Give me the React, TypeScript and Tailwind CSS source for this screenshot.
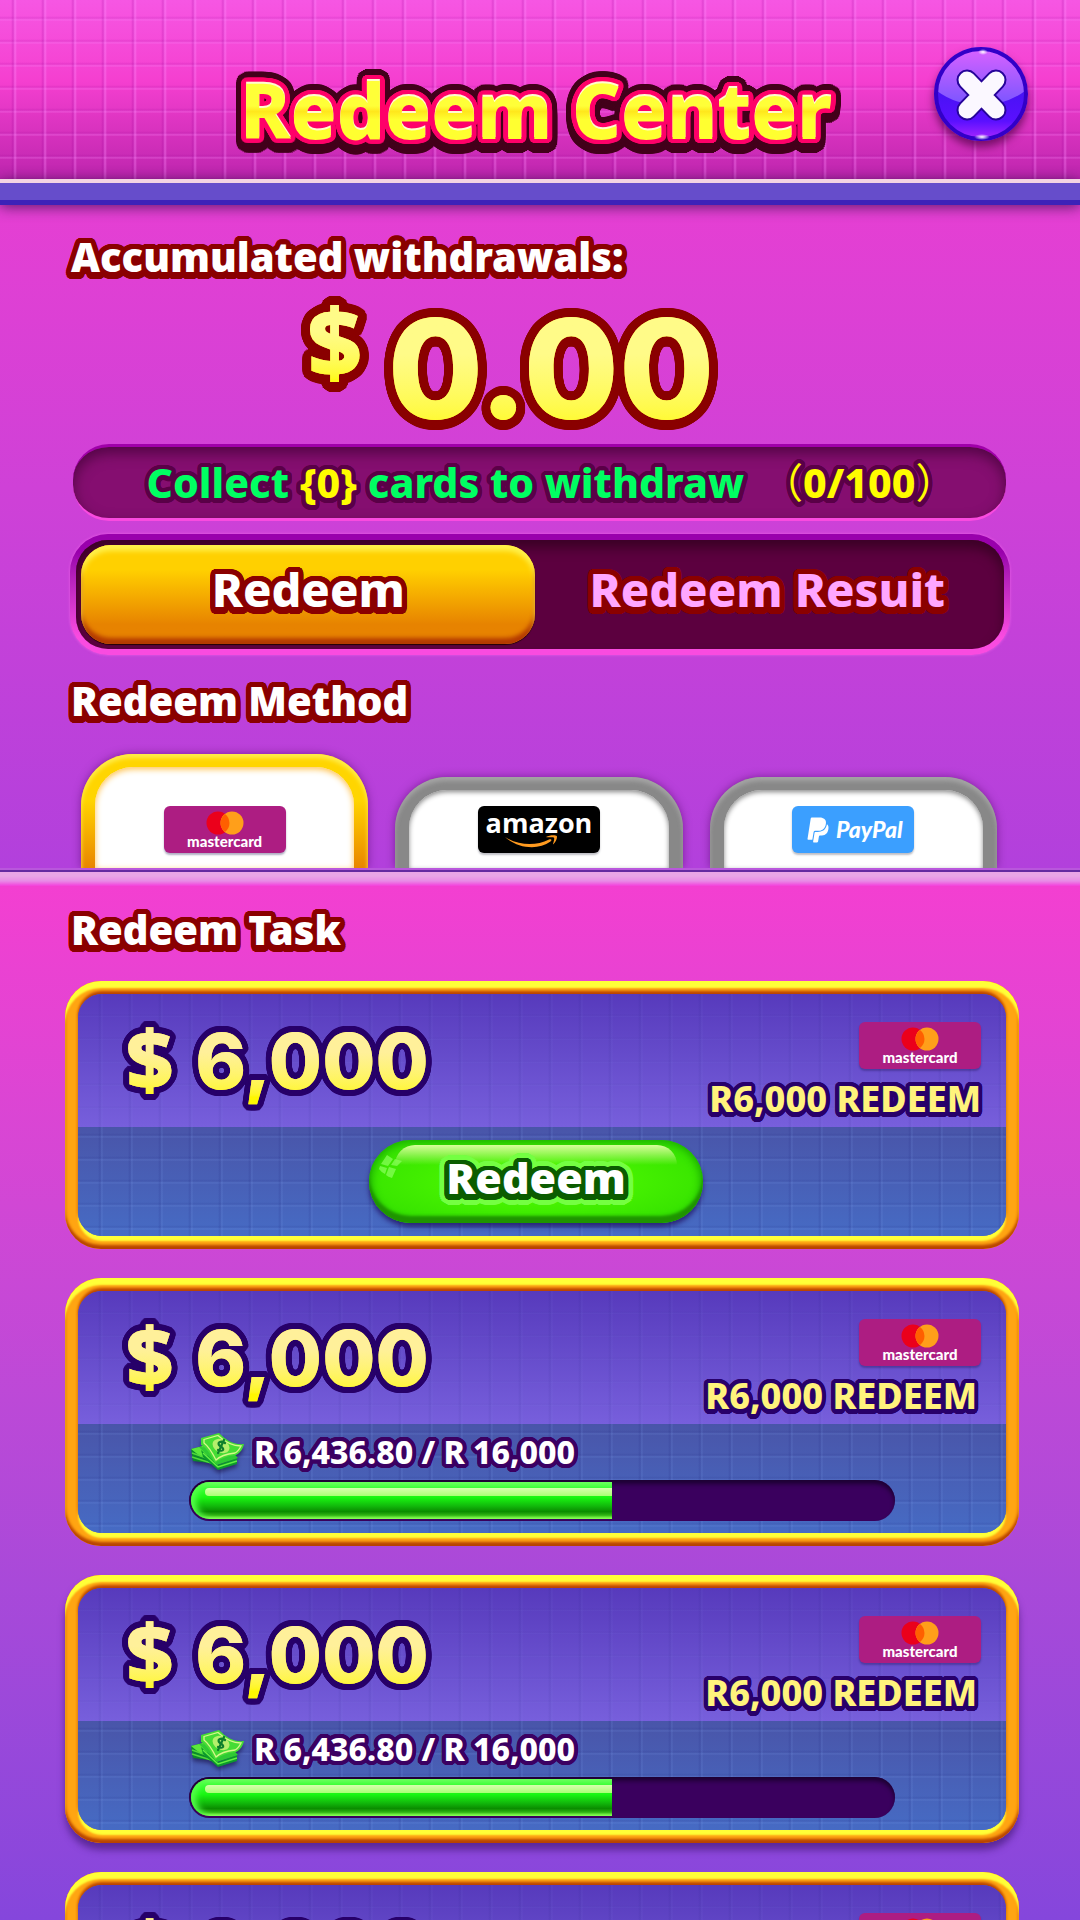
import React from "react";
import { FaPaypal } from "react-icons/fa";

/** Rounded outline: a ring of hard shadows at the given radius, optionally moved down. */
function ring(radius: number, color: string, dy = 0) {
  const steps = 32;
  return Array.from({ length: steps }, (_, i) => {
    const a = (i / steps) * Math.PI * 2;
    return `${(Math.cos(a) * radius).toFixed(2)}px ${(Math.sin(a) * radius + dy).toFixed(2)}px 0 ${color}`;
  }).join(",");
}

const shadows = {
  heading: [ring(5, "#8a0000"), ring(5, "#8a0000", 2)].join(","),
  amount: [ring(9, "#8a0000"), ring(9, "#8a0000", 1)].join(","),
  notice: [ring(4, "#5a0047"), ring(4, "#5a0047", 1)].join(","),
  cardAmount: [ring(3, "#28006a"), ring(6, "#28006a")].join(","),
  cardLabel: [ring(4, "#28006a"), ring(3, "#28006a", 2)].join(","),
  progress: ring(4, "#3b0062"),
  button: [ring(5, "#0b5c00", 1), ring(3, "#0b5c00"), ring(10, "#74ff42", 1), ring(7, "#74ff42", 1)].join(","),
  titlePink: [ring(5, "#ff0069", 1), ring(3, "#ff0069", 2)].join(","),
  titleDark: [ring(10, "#43001b", 0), ring(10, "#43001b", 3), ring(10, "#43001b", 6)].join(","),
};

/** Text with a vertical gradient fill laid over its own outlined copy. */
function GradientText({ text, className, shadow }: { text: string; className: string; shadow: string }) {
  return (
    <span
      data-text={text}
      className={`relative inline-block whitespace-pre before:absolute before:inset-0 before:bg-clip-text before:text-transparent before:[text-shadow:none] before:content-[attr(data-text)] ${className}`}
      style={{ textShadow: shadow }}
    >
      {text}
    </span>
  );
}

function SectionTitle({ children }: { children: React.ReactNode }) {
  return (
    <h2
      className="pl-[71px] text-[40px] leading-10 font-black text-white"
      style={{ textShadow: shadows.heading }}
    >
      {children}
    </h2>
  );
}

function CloseIcon() {
  return (
    <svg viewBox="0 0 94 94" className="size-full" aria-hidden="true">
      <defs>
        <linearGradient id="close-low" x1="0" y1="0" x2="0" y2="1">
          <stop offset="0.5" stopColor="#4a12f5" />
          <stop offset="0.8" stopColor="#5a10ff" />
          <stop offset="1" stopColor="#a626ff" />
        </linearGradient>
        <linearGradient id="close-top" x1="0" y1="0" x2="0" y2="1">
          <stop offset="0" stopColor="#dd62ff" />
          <stop offset="0.5" stopColor="#a95cff" />
          <stop offset="1" stopColor="#7a55ff" />
        </linearGradient>
        <radialGradient id="close-glint">
          <stop offset="0" stopColor="#fff" />
          <stop offset="1" stopColor="#fff" stopOpacity="0" />
        </radialGradient>
      </defs>
      <circle cx="47" cy="47" r="45" fill="url(#close-low)" />
      <path d="M3 44A44 44 0 0 1 91 44Q72 58 47 58T3 44Z" fill="url(#close-top)" />
      <circle cx="47" cy="47" r="45" fill="none" stroke="#3200c8" strokeWidth="4" />
      <path d="M33 33L62 63M62 33L33 63" stroke="#26049a" strokeWidth="21" strokeLinecap="round" />
      <path d="M33 33L62 63M62 33L33 63" stroke="#fbf8ff" strokeWidth="17" strokeLinecap="round" />
      <ellipse cx="49" cy="5" rx="5" ry="3" fill="url(#close-glint)" />
      <ellipse cx="48" cy="90" rx="8" ry="3" fill="url(#close-glint)" />
    </svg>
  );
}

function MastercardLogo() {
  return (
    <span className="flex h-[47px] w-[122px] flex-col items-center rounded-md bg-[#ad1d82] pt-[5px] shadow-[0_2px_2px_rgba(30,20,80,0.35)]">
      <svg viewBox="0 0 38 24" className="h-6 w-[38px]" aria-hidden="true">
        <circle cx="12" cy="12" r="11.5" fill="#eb001b" />
        <circle cx="26" cy="12" r="11.5" fill="#ff9f1a" />
        <path d="M19 2.9A11.5 11.5 0 0 1 19 21.1A11.5 11.5 0 0 1 19 2.9Z" fill="#ff5f00" />
      </svg>
      <span className="font-['Lato',sans-serif] text-[15px] leading-[13px] font-black text-white">mastercard</span>
    </span>
  );
}

function AmazonLogo() {
  return (
    <span className="relative flex h-[47px] w-[122px] justify-center rounded-md bg-black shadow-[0_2px_2px_rgba(40,40,60,0.3)]">
      <span className="font-['Open_Sans',sans-serif] text-[27px] leading-[34px] font-bold text-white">amazon</span>
      <svg viewBox="0 0 54 14" className="absolute top-[29px] left-[26px] h-[14px] w-[54px]" aria-hidden="true">
        <path d="M1 2C16 11 32 11 45 4.500C47 3.500 48.500 5 46.500 6.500C34 15.500 14 13.500 1 2Z" fill="#ff9a1f" />
        <path d="M42 2C46 -0.500 52 0 52.800 1C53.500 2.500 52 7 49 9.500C48.500 9.500 51 4 50 2.700C49 1.500 43.500 2.700 42 2Z" fill="#ff9a1f" />
      </svg>
    </span>
  );
}

function PaypalLogo() {
  return (
    <span className="flex h-[47px] w-[122px] items-center justify-center gap-1 rounded-md bg-[#3b9fff] text-white shadow-[0_2px_2px_rgba(40,40,60,0.3)]">
      <FaPaypal className="size-7" aria-hidden="true" />
      <span className="font-['Lato',sans-serif] text-[23px] leading-none font-black italic">PayPal</span>
    </span>
  );
}

function MoneyIcon() {
  return (
    <svg viewBox="0 0 56 40" className="h-10 w-14 drop-shadow-[0_3px_2px_rgba(20,10,60,0.6)]" aria-hidden="true">
      <path d="M2 17L18 13L30 25L28 32L4 29Z" fill="#0b8a2b" />
      <path d="M2 17L14 14L24 22L12 25Z" fill="#5be83a" />
      <path d="M3 21L20 27M3 25L22 31" stroke="#4fd83a" strokeWidth="1.500" />
      <path d="M12 18L29 33L48 26V32L29 38L14 25Z" fill="#0c9a2c" />
      <path d="M14 21L29 35L48 29" fill="none" stroke="#64ee42" strokeWidth="1.500" />
      <path d="M10 15L28 33L49 26L40 16Z" fill="#2fc934" />
      <path d="M12 6L30 1C37 8 44 13 55 12C54 17 51 21 47 23C37 24 31 27 26 31C22 23 17 15 12 13Z" fill="#45dc35" />
      <path d="M15 7.500L29 3.500C36 10 43 14 52 14C50 18 48 20 46 21C37 22 31 24 27 28C23 20 19 14 15 11Z" fill="none" stroke="#d6f78a" strokeWidth="1.300" />
      <ellipse cx="32" cy="14" rx="9" ry="6.500" transform="rotate(28 32 14)" fill="#b5ef6c" />
      <path d="M36 11C32 8 27 11 31 14C36 17 35 20 29 18M35 8L29 21" fill="none" stroke="#0d7f2c" strokeWidth="2.200" strokeLinecap="round" />
    </svg>
  );
}

function MethodTab({ label, active, children }: { label: string; active?: boolean; children: React.ReactNode }) {
  return (
    <button
      type="button"
      aria-label={label}
      aria-pressed={!!active}
      className={
        active
          ? "flex h-[114px] flex-1 rounded-t-[52px] bg-linear-to-b from-[#ffd500] from-40% to-[#e88500] px-[14px] pt-[13px] shadow-[0_0_8px_rgba(70,0,90,0.5),inset_0_4px_4px_#ffec4a]"
          : "flex h-[91px] flex-1 rounded-t-[52px] bg-[#888] px-[14px] pt-[13px] shadow-[0_0_8px_rgba(70,0,90,0.5),inset_0_4px_4px_#a4a4a4]"
      }
    >
      <span
        className={
          active
            ? "flex h-full w-full items-end justify-center rounded-t-[38px] bg-white pb-[15px] shadow-[inset_0_2px_6px_#ffc04a]"
            : "flex h-full w-full items-end justify-center rounded-t-[38px] bg-white pb-[15px] shadow-[inset_0_2px_5px_#888]"
        }
      >
        {children}
      </span>
    </button>
  );
}

type Task = { amount: string; label: string; current?: string; target?: string; percent?: number; raised?: boolean };

const tasks: Task[] = [
  { amount: "6,000", label: "R6,000 REDEEM" },
  { amount: "6,000", label: "R6,000 REDEEM", current: "R 6,436.80", target: "R 16,000", percent: 60 },
  { amount: "6,000", label: "R6,000 REDEEM", current: "R 6,436.80", target: "R 16,000", percent: 60, raised: true },
  { amount: "6,000", label: "R6,000 REDEEM", current: "R 6,436.80", target: "R 16,000", percent: 60 },
];

const faintTiles =
  "bg-[repeating-linear-gradient(90deg,transparent_0_20px,rgba(20,20,110,0.08)_22px,rgba(150,170,255,0.07)_24px,transparent_25px_30px),repeating-linear-gradient(180deg,transparent_0_20px,rgba(20,20,110,0.04)_21px,rgba(150,170,255,0.06)_23px)]";
const tiles =
  "bg-[repeating-linear-gradient(90deg,transparent_0_20px,rgba(20,20,110,0.13)_22px,rgba(140,180,255,0.16)_24px,transparent_25px_30px),repeating-linear-gradient(180deg,transparent_0_6px,rgba(20,20,110,0.1)_8px,rgba(140,180,255,0.16)_10px,transparent_11px_23px)]";

function TaskCard({ task }: { task: Task }) {
  return (
    <li
      className={`shrink-0 rounded-[36px] bg-[#ffa512] p-[13px] ${
        task.raised
          ? "shadow-[0_7px_7px_rgba(60,20,110,0.6),inset_0_7px_2px_#ffff38,inset_0_-4px_3px_#b84300,inset_0_0_4px_#ff8000]"
          : "shadow-[inset_0_7px_2px_#ffff38,inset_0_-4px_3px_#b84300,inset_0_0_4px_#ff8000]"
      }`}
    >
      <div className="overflow-hidden rounded-[24px] bg-[#4668be] shadow-[0_-3px_3px_#bb4300,0_5px_2px_#ffff38,0_0_3px_#ff8500]">
        <div className="bg-linear-to-b from-[#573abc] to-[#775fdc]">
          <div className={`flex h-[133px] items-start justify-between pr-[25px] pl-[48px] ${faintTiles}`}>
            <p className="flex gap-[22px] pt-[22px] font-black">
              <GradientText
                text="$"
                shadow={shadows.cardAmount}
                className="text-[82px] leading-[82px] text-[#fff22c] before:bg-linear-to-b before:from-[#fff09a] before:from-40% before:to-[#fff700] before:to-90%"
              />
              <GradientText
                text={task.amount}
                shadow={shadows.cardAmount}
                className="font-['Inter',sans-serif] text-[77px] leading-[90px] font-extrabold text-[#fff22c] before:bg-linear-to-b before:from-[#fff09a] before:from-40% before:to-[#fff700] before:to-90%"
              />
            </p>
            <div className="flex flex-col items-end gap-3 pt-[28px]">
              <MastercardLogo />
              <p
                className={`text-[36px] leading-9 font-extrabold text-[#fff37c] ${task.percent ? "pr-1" : ""}`}
                style={{ textShadow: shadows.cardLabel }}
              >
                {task.label}
              </p>
            </div>
          </div>
        </div>
        <div className="bg-linear-to-b from-[#4955a9] to-[#466bc4]">
          <div className={`flex h-[109px] flex-col ${tiles}`}>
            {task.percent === undefined ? (
              <div className="flex justify-center pt-[13px] pr-3">
                <button
                  type="button"
                  className="relative h-[83px] w-[334px] rounded-full bg-radial from-[#52ff00] to-[#2fdc00] pb-2 text-[43px] leading-none font-black text-white shadow-[0_4px_5px_rgba(30,10,90,0.7),inset_0_-7px_3px_#1f9400,inset_0_0_8px_2px_#19a800] before:absolute before:inset-x-[26px] before:top-[5px] before:h-5 before:rounded-t-[20px] before:bg-linear-to-b before:from-[#d9ff9a] before:to-transparent"
                >
                  <svg viewBox="0 0 24 24" className="absolute top-[14px] left-[9px] size-6" aria-hidden="true">
                    <path d="M9 1L15 5L10 12L3 10ZM17 5L24 7L19 12L13 11ZM2 12L9 14L7 20Q3 18 1 15ZM11 13L18 15L14 24Q10 23 8 21Z" fill="#8cff5e" opacity="0.7" />
                  </svg>
                  <span className="relative" style={{ textShadow: shadows.button }}>
                    Redeem
                  </span>
                </button>
              </div>
            ) : (
              <div className="px-[111px] pt-[8px]">
                <div className="flex h-[40px] items-center gap-[9px]">
                  <MoneyIcon />
                  <p
                    className="text-[32px] leading-10 font-extrabold whitespace-nowrap text-white"
                    style={{ textShadow: shadows.progress }}
                  >
                    {task.current} / {task.target}
                  </p>
                </div>
                <div
                  role="progressbar"
                  aria-label="Redeem progress"
                  aria-valuenow={task.percent}
                  aria-valuemin={0}
                  aria-valuemax={100}
                  className="mt-2 h-[41px] overflow-hidden rounded-full bg-[#3a005e] p-[2px] shadow-[inset_0_4px_4px_#1d0033]"
                >
                  <div
                    className="relative h-full rounded-l-full bg-[linear-gradient(#73ff63_0%,#39ff35_17%,#19f511_42%,#11b80b_65%,#0a8c00_80%,#31b414_90%,#8cff52_98%)] shadow-[inset_7px_0_6px_-2px_#55ff4a] before:absolute before:top-[6px] before:right-0 before:left-[14px] before:h-2 before:rounded-l-full before:bg-linear-to-b before:from-[#d7ffad] before:to-[#aaff73]"
                    style={{ width: `${task.percent}%` }}
                  />
                </div>
              </div>
            )}
          </div>
        </div>
      </div>
    </li>
  );
}

export default function App() {
  return (
    <div className="flex h-screen flex-col overflow-hidden font-['Noto_Sans',sans-serif]">
      <header className="bg-linear-to-b from-[#f656e3] via-[#f53fd0] via-45% to-[#bd25ae]">
        <div className="grid h-[179px] grid-cols-[1fr_auto_1fr] items-start bg-[repeating-linear-gradient(90deg,transparent_0_11px,rgba(150,0,150,0.22)_13px,rgba(255,140,255,0.4)_15px,transparent_17px_30px),repeating-linear-gradient(180deg,transparent_0_16px,rgba(150,0,150,0.15)_18px,rgba(255,140,255,0.32)_20px,transparent_21px_23px)]">
          <span />
          <h1
            data-text="Redeem Center"
            className="relative isolate mr-2 pt-[68px] text-[76px] leading-[80px] font-extrabold whitespace-nowrap text-[#fffbd0] before:absolute before:inset-x-0 before:top-[68px] before:z-[-1] before:[text-shadow:var(--dark)] before:content-[attr(data-text)] after:absolute after:inset-x-0 after:top-[70px] after:bg-[linear-gradient(#ffff38_45%,#ffe71c_52%,#ffff30_62%)] after:bg-clip-text after:text-transparent after:[text-shadow:none] after:content-[attr(data-text)]"
            style={{ textShadow: shadows.titlePink, "--dark": shadows.titleDark } as React.CSSProperties}
          >
            Redeem Center
          </h1>
          <button
            type="button"
            aria-label="Close"
            className="mt-[47px] mr-[52px] size-[94px] justify-self-end rounded-full shadow-[0_6px_8px_rgba(80,0,70,0.7)]"
          >
            <CloseIcon />
          </button>
        </div>
      </header>
      <div className="relative h-[26px] shrink-0 border-t-4 border-b-[5px] border-t-[#f3d3e3] border-b-[#3d22b8] bg-[#664dcb] shadow-[0_2px_14px_rgba(60,20,80,0.8)]" />

      <section className="bg-linear-to-b from-[#e53fd3] to-[#b240dc] pt-8">
        <SectionTitle>Accumulated withdrawals:</SectionTitle>
        <p className="mt-4 flex h-[144px] items-start justify-center gap-[26px] pr-[58px] font-black">
          <GradientText
            text="$"
            shadow={shadows.amount}
            className="text-[94px] leading-[96px] text-[#fff22c] before:bg-linear-to-b before:from-[#fffb88] before:from-40% before:to-[#fffa18] before:to-90%"
          />
          <GradientText
            text="0.00"
            shadow={shadows.amount}
            className="font-['Inter',sans-serif] text-[138px] leading-[152px] font-extrabold text-[#fff22c] before:bg-linear-to-b before:from-[#fffb88] before:from-40% before:to-[#fffa18] before:to-90%"
          />
        </p>

        <p
          className="mt-[7px] mr-[74px] ml-[73px] flex h-[77px] items-center justify-center gap-[18px] rounded-[36px] border-t-[3px] border-b-[3px] border-t-[#a000aa] border-b-[#fa4be0] bg-[#850e70] pl-6 text-[41px] leading-none font-extrabold whitespace-nowrap text-[#00ff62] shadow-[inset_0_6px_14px_rgba(60,0,50,0.7)]"
          style={{ textShadow: shadows.notice }}
        >
          <span>
            Collect <span className="text-[#fffc00]">{"{0}"}</span> cards to withdraw
          </span>
          <span className="font-['Noto_Sans','Noto_Sans_CJK_SC',sans-serif] text-[#fffc00]">
            <span className="font-normal">（</span>0/100<span className="font-normal">）</span>
          </span>
        </p>

        <div className="mx-[70px] mt-[13px] rounded-[38px] bg-linear-to-b from-[#9900ac] from-15% to-[#fa4be0] to-85% p-[6px] shadow-[0_0_3px_rgba(255,110,240,0.7)]">
          <div
            role="tablist"
            className="flex h-[109px] rounded-[32px] bg-[#5c003f] p-[5px] shadow-[inset_0_8px_12px_#3b0026]"
          >
            <button
              type="button"
              role="tab"
              aria-selected="true"
              className="w-[49.5%] rounded-[30px] bg-linear-to-b from-[#ffd000] from-25% to-[#e78300] to-80% pb-[10px] text-[47px] leading-none font-extrabold text-white shadow-[0_1px_1px_#200,inset_0_6px_5px_#fff04a,inset_0_-6px_4px_#b43a00]"
              style={{ textShadow: shadows.heading }}
            >
              Redeem
            </button>
            <button
              type="button"
              role="tab"
              aria-selected="false"
              className="flex-1 pb-[10px] text-[47px] leading-none font-extrabold text-[#ffa6ff]"
              style={{ textShadow: shadows.heading }}
            >
              Redeem Resuit
            </button>
          </div>
        </div>

        <div className="mt-[26px]">
          <SectionTitle>Redeem Method</SectionTitle>
        </div>
        <div className="flex items-end gap-[27px] overflow-hidden pt-[33px] pr-[83px] pl-[81px]">
          <MethodTab label="Mastercard" active>
            <MastercardLogo />
          </MethodTab>
          <MethodTab label="Amazon">
            <AmazonLogo />
          </MethodTab>
          <MethodTab label="PayPal">
            <PaypalLogo />
          </MethodTab>
        </div>
      </section>
      <div className="h-[18px] shrink-0 border-t-2 border-t-[#b957dc] bg-[linear-gradient(#642aa0_0_2px,#e9a5e6_2px_6px,#e88be6_11px,#f43fdc_16px)]" />

      <section className="min-h-0 flex-1 overflow-y-auto bg-linear-to-b from-[#f33fd1] to-[#8546dc] pt-6 [scrollbar-width:none]">
        <SectionTitle>Redeem Task</SectionTitle>
        <ul className="mt-[31px] flex flex-col gap-[29px] pr-[61px] pl-[65px]">
          {tasks.map((task, i) => (
            <TaskCard key={i} task={task} />
          ))}
        </ul>
      </section>
    </div>
  );
}
